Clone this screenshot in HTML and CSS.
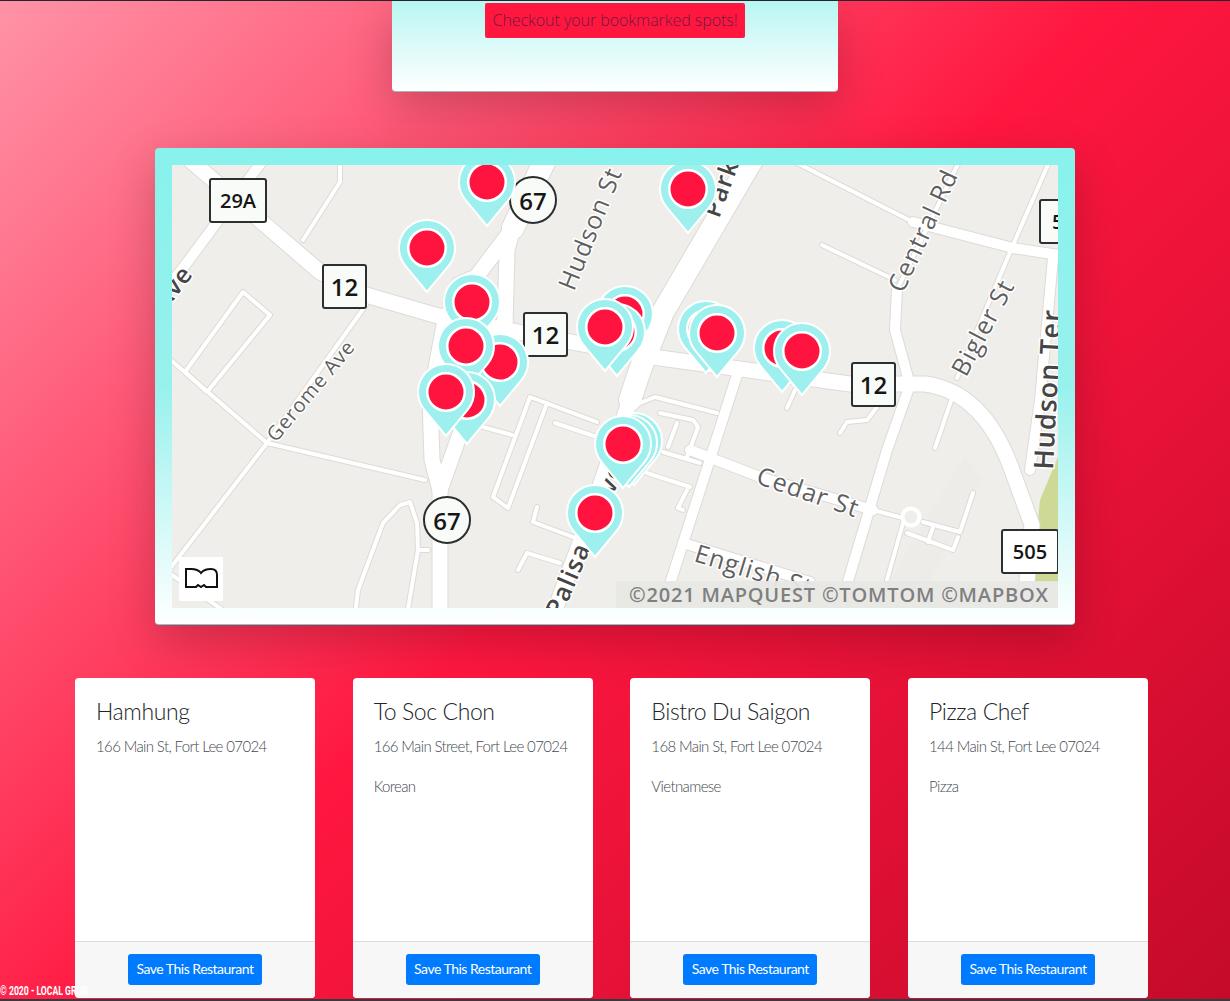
FILE: index.html
```html
<!DOCTYPE html>
<html lang="en">

<head>
    <meta charset="UTF-8">
    <title>Local Grub</title>
    <link rel="stylesheet" href="styles.css">
</head>

<body>
    <div class="jumbotron">
        <a class="btn-saved">Checkout your bookmarked spots!</a>
    </div>

    <div class="map-card">
        <svg class="map" viewBox="172 165 886 443" width="886" height="443">
            <defs>
                <g id="roads-xl">
                    <path d="M752 160 L663 312 L640 370 L630 400" />
                    <path d="M545 160 L513 228" />
                </g>
                <g id="roads-wide">
                    <path d="M190 160 L320 272 L366 295 L445 318 L560 340 L660 358 L850 384 L925 384 Q985 392 1013 473 L1032 525 L1024 615" />
                    <path d="M513 228 L507 250 L505 325" />
                    <path d="M513 228 L483 268 L445 318" />
                    <path d="M445 320 L430 400 L432 460 L440 490 L440 615" />
                    <path d="M505 320 L465 420 L440 490" />
                    <path d="M630 400 L580 543 L553 615" />
                </g>
                <g id="roads-mid">
                    <path d="M263 160 L183 268 L165 290" />
                    <path d="M737 375 L668 590" />
                    <path d="M690 450 L760 477 L873 510" />
                    <path d="M910 385 L887 450 L838 615" />
                    <path d="M683 543 L810 582" />
                    <path d="M913 222 L1013 248 L1065 256" />
                    <path d="M1053 258 L1040 400 L1030 470" />
                    <path d="M897 290 L895 330 L910 385" />
                </g>
                <g id="roads-thin">
                    <path d="M795 162 L913 222" />
                    <path d="M822 245 L895 280" />
                    <path d="M897 290 L960 160" />
                    <path d="M1050 160 L1013 245 L957 378" />
                    <path d="M953 395 L935 448" />
                    <path d="M340 160 L340 182 L303 240" />
                    <path d="M243 292 L270 315 L207 392 L185 372 Z" />
                    <path d="M165 355 L267 443 L425 480" />
                    <path d="M267 443 L165 575" />
                    <path d="M267 443 L366 305" />
                    <path d="M172 575 L230 615" />
                    <path d="M355 615 L358 590 L383 523 L400 505 L410 502 L417 523 L418 550 L407 615" />
                    <path d="M418 550 H428" />
                    <path d="M455 280 L483 268" />
                    <path d="M597 422 L530 397 L493 497 L508 508 L547 403" />
                    <path d="M483 427 L512 435" />
                    <path d="M537 507 L533 522 L573 537" />
                    <path d="M518 570 L527 553 L560 563" />
                    <path d="M555 423 L597 437" />
                    <path d="M640 403 L655 397 L717 413" />
                    <path d="M660 413 L693 420 L698 427 L687 457" />
                    <path d="M677 423 L668 447" />
                    <path d="M663 452 L700 463" />
                    <path d="M647 473 L690 487" />
                    <path d="M687 490 L678 508 L683 510" />
                    <path d="M873 510 L903 518" />
                    <path d="M903 523 L887 580" />
                    <path d="M907 533 L953 550 L958 537" />
                    <path d="M933 527 L928 542" />
                    <path d="M923 522 L960 532 L973 493" />
                    <path d="M840 433 L847 422 L867 420 L877 407" />
                    <path d="M787 408 L795 390" />
                </g>
                <g id="pin">
                    <path class="pin-body" d="M0 44 L-21.6 17.8 A28 28 0 1 1 21.6 17.8 Z" />
                    <circle class="pin-dot" r="18.750" />
                </g>
            </defs>

            <rect class="land" x="172" y="165" width="886" height="443" />
            <polygon class="park" points="1060,452 1040,500 1032,582 1060,582" />
            <polygon class="patch" points="965,455 982,480 930,580 885,590" />

            <use href="#roads-xl" class="casing" stroke-width="24" />
            <use href="#roads-wide" class="casing" stroke-width="17" />
            <use href="#roads-mid" class="casing" stroke-width="12" />
            <use href="#roads-thin" class="casing" stroke-width="6" />
            <use href="#roads-xl" class="road" stroke-width="22" />
            <use href="#roads-wide" class="road" stroke-width="15" />
            <use href="#roads-mid" class="road" stroke-width="10" />
            <use href="#roads-thin" class="road" stroke-width="4" />
            <circle class="roundabout" cx="911" cy="517" r="8.500" />

            <text class="street street-dark" transform="translate(194 274) rotate(-52)" text-anchor="end">Ave</text>
            <text class="street street-small" transform="translate(276 443) rotate(-50)">Gerome Ave</text>
            <text class="street" transform="translate(574 292) rotate(-68)">Hudson St</text>
            <text class="street street-dark" transform="translate(719 219) rotate(-70)">Park Ave</text>
            <text class="street" transform="translate(903 294) rotate(-65)">Central Rd</text>
            <text class="street" transform="translate(966 378) rotate(-62)">Bigler St</text>
            <text class="street street-dark street-large" transform="translate(1053 470) rotate(-87)">Hudson Ter</text>
            <text class="street" transform="translate(755 483) rotate(19)">Cedar St</text>
            <text class="street" transform="translate(693 561) rotate(17)">English St</text>
            <text class="street street-dark" transform="translate(561 618) rotate(-67)">Palisade Ave</text>

            <rect class="shield" x="210" y="179" width="56" height="43" rx="2" />
            <text class="shield-text shield-small" x="238" y="208">29A</text>
            <rect class="shield" x="323" y="265" width="43" height="43" rx="2" />
            <text class="shield-text" x="344.500" y="296">12</text>
            <rect class="shield" x="524" y="313" width="43" height="43" rx="2" />
            <text class="shield-text" x="545.500" y="344">12</text>
            <rect class="shield" x="852" y="363" width="43" height="43" rx="2" />
            <text class="shield-text" x="873.500" y="394">12</text>
            <rect class="shield" x="1040" y="200" width="56" height="43" rx="2" />
            <text class="shield-text shield-small shield-cut" x="1052" y="229">505</text>
            <rect class="shield shield-white" x="1002" y="530" width="56" height="43" rx="2" />
            <text class="shield-text shield-small" x="1030" y="559">505</text>
            <circle class="shield" cx="533" cy="200" r="23" />
            <text class="shield-text" x="533" y="210">67</text>
            <circle class="shield" cx="447" cy="520" r="23" />
            <text class="shield-text" x="447" y="530">67</text>

            <use href="#pin" x="487" y="182" />
            <use href="#pin" x="688" y="189" />
            <use href="#pin" x="427" y="248" />
            <use href="#pin" x="472" y="302" />
            <use href="#pin" x="625" y="314" />
            <use href="#pin" x="617" y="332" />
            <use href="#pin" x="605" y="327" />
            <use href="#pin" x="500" y="362" />
            <use href="#pin" x="466" y="346" />
            <use href="#pin" x="467" y="400" />
            <use href="#pin" x="446" y="392" />
            <use href="#pin" x="706" y="329" />
            <use href="#pin" x="717" y="333" />
            <use href="#pin" x="782" y="348" />
            <use href="#pin" x="802" y="351" />
            <use href="#pin" x="634" y="441" />
            <use href="#pin" x="629" y="443" />
            <use href="#pin" x="623" y="444" />
            <use href="#pin" x="595" y="513" />

            <rect class="attrib-bar" x="616" y="581" width="442" height="27" />
            <text class="attrib" x="629" y="602" textLength="419" lengthAdjust="spacing">©2021 MAPQUEST ©TOMTOM ©MAPBOX</text>

            <rect class="book-tile" x="179" y="557" width="44" height="44" rx="1" />
            <path class="book" d="M186 569 H191 Q198 569 201 573 Q204 569 211 569 Q217 569 217 575 V587 H206 L204 585 L201 587 L198 585 L196 587 H186 Z" />
        </svg>
    </div>

    <div class="card-row">
        <div class="card">
            <div class="card-body">
                <h5 class="card-title">Hamhung</h5>
                <p class="card-text">166 Main St, Fort Lee 07024</p>
            </div>
            <div class="card-footer"><a class="btn-save">Save This Restaurant</a></div>
        </div>
        <div class="card">
            <div class="card-body">
                <h5 class="card-title">To Soc Chon</h5>
                <p class="card-text">166 Main Street, Fort Lee 07024</p>
                <p class="card-text">Korean</p>
            </div>
            <div class="card-footer"><a class="btn-save">Save This Restaurant</a></div>
        </div>
        <div class="card">
            <div class="card-body">
                <h5 class="card-title">Bistro Du Saigon</h5>
                <p class="card-text">168 Main St, Fort Lee 07024</p>
                <p class="card-text">Vietnamese</p>
            </div>
            <div class="card-footer"><a class="btn-save">Save This Restaurant</a></div>
        </div>
        <div class="card">
            <div class="card-body">
                <h5 class="card-title">Pizza Chef</h5>
                <p class="card-text">144 Main St, Fort Lee 07024</p>
                <p class="card-text">Pizza</p>
            </div>
            <div class="card-footer"><a class="btn-save">Save This Restaurant</a></div>
        </div>
    </div>

    <div class="copyright">© 2020 - LOCAL GRUB</div>
</body>

</html>
```

FILE: styles.css
```css
html {
    height: 100%;
    background: linear-gradient(135deg, #ff93a7 0%, #ff1740 50%, #c40a2a 100%);
}

body {
    position: relative;
    box-sizing: border-box;
    height: 1001px;
    margin: 0;
    overflow: hidden;
    border-top: 1px solid #23272b;
    border-bottom: 2px solid #343a40;
    font-family: 'Lato', 'Open Sans', sans-serif;
    font-weight: 300;
    color: #212529;
}

.jumbotron {
    box-sizing: border-box;
    width: 446px;
    height: 91px;
    margin: 0 auto;
    padding-top: 2px;
    text-align: center;
    background: linear-gradient(#b8f6f2, #ffffff);
    border-radius: 0 0 4px 4px;
    border-bottom: 1px solid #9fb9b8;
    box-shadow: 0 16px 48px rgba(0, 0, 0, 0.2);
}

.btn-saved {
    display: inline-block;
    box-sizing: border-box;
    width: 260px;
    height: 35px;
    line-height: 35px;
    font-family: 'Open Sans', sans-serif;
    font-weight: 300;
    font-size: 16px;
    letter-spacing: -0.05px;
    color: #701a3c;
    background-color: #ff1740;
    border-radius: 2px;
}

.map-card {
    box-sizing: border-box;
    width: 920px;
    height: 477px;
    margin: 56px auto 0;
    padding: 17px 17px 0;
    background: linear-gradient(#88f2ec 0%, #98f1ed 50%, #ffffff 100%);
    border-radius: 4px;
    border-bottom: 1px solid #5fd8d2;
    box-shadow: 0 16px 48px rgba(0, 0, 0, 0.2);
}

.map {
    display: block;
}

.land {
    fill: #efeeea;
}

.park {
    fill: #cdd994;
}

.patch {
    fill: #edece8;
}

.casing {
    fill: none;
    stroke: #dcdbd7;
    stroke-linejoin: round;
    stroke-linecap: round;
}

.road {
    fill: none;
    stroke: #ffffff;
    stroke-linejoin: round;
    stroke-linecap: round;
}

.roundabout {
    fill: #efeeea;
    stroke: #ffffff;
    stroke-width: 4;
}

.street {
    font-family: 'Open Sans', sans-serif;
    font-size: 25px;
    font-weight: 400;
    letter-spacing: 1px;
    fill: #5f5f5f;
    stroke: #ffffff;
    stroke-width: 3px;
    paint-order: stroke;
}

.street-small {
    font-size: 20px;
}

.street-dark {
    font-size: 25px;
    font-weight: 600;
    fill: #454545;
}

.street-large {
    font-size: 27px;
}

.shield {
    fill: #f9fbf9;
    stroke: #2b2f2f;
    stroke-width: 2;
}

.shield-white {
    fill: #ffffff;
}

.shield-text {
    font-family: 'Open Sans', sans-serif;
    font-size: 24px;
    font-weight: 600;
    text-anchor: middle;
    fill: #161616;
}

.shield-small {
    font-size: 20px;
}

.shield-cut {
    text-anchor: start;
}

.pin-body {
    fill: #9ef0ee;
    stroke: #ffffff;
    stroke-width: 2;
}

.pin-dot {
    fill: #ff1440;
    stroke: #ffffff;
    stroke-width: 2.5;
}

.attrib-bar {
    fill: #e7e7e5;
    fill-opacity: 0.95;
}

.attrib {
    font-family: 'Open Sans', sans-serif;
    font-size: 20px;
    font-weight: 600;
    fill: #7f7f7f;
}

.book-tile {
    fill: #ffffff;
}

.book {
    fill: #ffffff;
    stroke: #111111;
    stroke-width: 2;
}

.card-row {
    display: flex;
    justify-content: space-between;
    width: 1073px;
    margin: 53px 0 0 75px;
}

.card {
    display: flex;
    flex-direction: column;
    box-sizing: border-box;
    width: 240px;
    height: 320px;
    background-color: #ffffff;
    border-radius: 4px;
}

.card-body {
    flex: 1;
    padding: 20px 21px;
}

.card-title {
    margin: -1px 0 8px;
    font-size: 23px;
    line-height: 29px;
    font-weight: 300;
    letter-spacing: -0.4px;
}

.card-text {
    margin: 0 0 16px;
    font-size: 15px;
    line-height: 24px;
    letter-spacing: -0.62px;
    color: #454a4f;
}

.card-footer {
    box-sizing: border-box;
    height: 57px;
    padding-top: 12px;
    text-align: center;
    background-color: #f7f7f7;
    border-top: 1px solid #dcdcdc;
    border-radius: 0 0 4px 4px;
}

.btn-save {
    display: inline-block;
    width: 134px;
    height: 31px;
    line-height: 30px;
    font-size: 14px;
    font-weight: 400;
    letter-spacing: -0.5px;
    color: #ffffff;
    background-color: #007bff;
    border-radius: 3px;
}

/* sits on top of the first card, same as the live page */
.copyright {
    position: absolute;
    left: 0;
    bottom: 1px;
    font-family: 'Roboto', sans-serif;
    font-size: 12px;
    line-height: 14px;
    font-weight: 700;
    color: #ffffff;
    white-space: nowrap;
    transform: scaleX(0.72);
    transform-origin: left center;
}
```
